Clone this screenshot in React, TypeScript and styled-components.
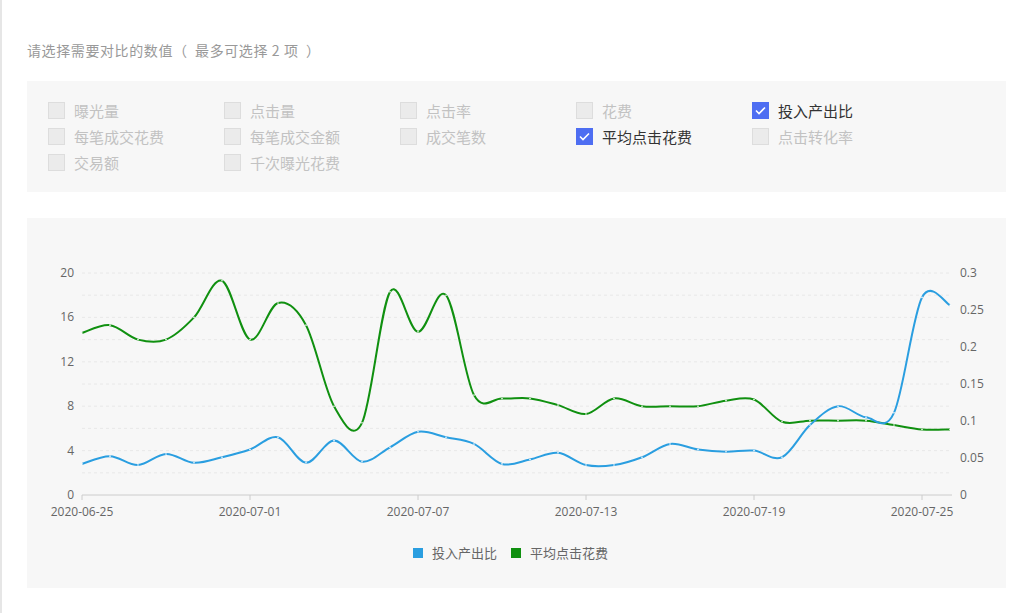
import React from "react";
import styled, { createGlobalStyle } from "styled-components";

const G = createGlobalStyle`
  body { margin: 0; background: #fff; font-family: "Noto Sans CJK SC", "Open Sans", sans-serif; }
`;
const Page = styled.div`
  width: 1033px; height: 613px; box-sizing: border-box; border-left: 2px solid #e6e6e6;
  padding: 40px 25px 0 25px; display: flex; flex-direction: column;
`;
const Title = styled.div`font-size: 14px; letter-spacing: 0.6px; color: #999; height: 22px; margin-bottom: 19px; white-space: pre;`;
const Box = styled.div`
  width: 979px; height: 111px; background: #f7f7f7; box-sizing: border-box;
  padding: 19px 0 0 21px; display: grid; grid-template-columns: repeat(5, 176px); grid-auto-rows: 26px;
`;
const Item = styled.div<{ on?: boolean }>`
  display: flex; align-items: center; gap: 9px; font-size: 15px; color: ${p => (p.on ? "#333" : "#c2c2c2")};
  height: 26px; margin-top: -3px;
`;
const Cb = styled.span<{ on?: boolean }>`
  width: 17px; height: 17px; box-sizing: border-box; display: flex; align-items: center; justify-content: center;
  background: ${p => (p.on ? "#4e6ef2" : "#ebebeb")}; border: 1px solid ${p => (p.on ? "#4e6ef2" : "#ddd")};
`;
const ChartBox = styled.div`
  margin-top: 26px; width: 979px; height: 370px; background: #f7f7f7; display: flex; flex-direction: column; align-items: center;
`;
const Plot = styled.div`align-self: flex-start;`;
const Legend = styled.div`display: flex; gap: 14px; font-size: 13px; color: #666; margin-top: 6px; margin-left: -12px;`;
const LItem = styled.div`display: flex; align-items: center; gap: 9px;`;
const Sw = styled.span<{ c: string }>`width: 10px; height: 10px; background: ${p => p.c};`;

const items: [string, boolean][] = [
  ["曝光量", false], ["点击量", false], ["点击率", false], ["花费", false], ["投入产出比", true],
  ["每笔成交花费", false], ["每笔成交金额", false], ["成交笔数", false], ["平均点击花费", true], ["点击转化率", false],
  ["交易额", false], ["千次曝光花费", false],
];

const green = [14.6,15.3,14,14,16,19.3,14,17.3,15.3,8,6.5,18.3,14.7,18,9,8.7,8.7,8.1,7.3,8.7,8,8,8,8.5,8.6,6.6,6.7,6.7,6.7,6.3,5.9,5.9];
const blue = [2.8,3.5,2.7,3.7,2.9,3.4,4.1,5.2,2.9,4.9,3,4.3,5.7,5.2,4.6,2.8,3.2,3.8,2.7,2.7,3.4,4.6,4.1,3.9,4.0,3.4,6.3,8,7,7.4,17.8,17.1];

const X0 = 55, DX = 28, Y0 = 277, K = 11.1;
const pts = (a: number[]) => a.map((v, i) => [X0 + i * DX, Y0 - v * K]);
function path(a: number[]) {
  const p = pts(a);
  let d = `M${p[0][0]},${p[0][1]}`;
  for (let i = 0; i < p.length - 1; i++) {
    const p0 = p[i - 1] || p[i], p1 = p[i], p2 = p[i + 1], p3 = p[i + 2] || p2;
    const c1 = [p1[0] + (p2[0] - p0[0]) / 6, p1[1] + (p2[1] - p0[1]) / 6];
    const c2 = [p2[0] - (p3[0] - p1[0]) / 6, p2[1] - (p3[1] - p1[1]) / 6];
    d += ` C${c1[0]},${c1[1]} ${c2[0]},${c2[1]} ${p2[0]},${p2[1]}`;
  }
  return d;
}
const dates = ["2020-06-25", "2020-07-01", "2020-07-07", "2020-07-13", "2020-07-19", "2020-07-25"];

function Chart() {
  const txt = { fontSize: 12, fill: "#666", fontFamily: "Open Sans, sans-serif" };
  return (
    <svg width="979" height="314">
      {[1, 2, 3, 4, 5, 6, 7, 8, 9, 10].map(i => (
        <line key={i} x1={X0} x2={925} y1={Y0 - i * 2 * K} y2={Y0 - i * 2 * K} stroke="#e8e8e8" strokeDasharray="3 3" />
      ))}
      <line x1={X0} x2={925} y1={Y0} y2={Y0} stroke="#ccc" />
      {[0, 4, 8, 12, 16, 20].map(v => (
        <text key={v} x={47} y={Y0 - v * K + 4} textAnchor="end" {...txt}>{v}</text>
      ))}
      {["0", "0.05", "0.1", "0.15", "0.2", "0.25", "0.3"].map((v, i) => (
        <text key={v} x={933} y={Y0 - i * 3.333 * K + 4} {...txt}>{v}</text>
      ))}
      {dates.map((d, i) => (
        <g key={d}>
          <line x1={X0 + i * 168} x2={X0 + i * 168} y1={Y0} y2={Y0 + 5} stroke="#ccc" />
          <text x={X0 + i * 168} y={Y0 + 21} textAnchor="middle" {...txt}>{d}</text>
        </g>
      ))}
      <path d={path(green)} fill="none" stroke="#109010" strokeWidth="2" />
      <path d={path(blue)} fill="none" stroke="#2a9ee0" strokeWidth="2" />
      {pts(green).map(([x, y], i) => <circle key={"g" + i} cx={x} cy={y} r="0.8" fill="#fff" />)}
      {pts(blue).map(([x, y], i) => <circle key={"b" + i} cx={x} cy={y} r="0.8" fill="#fff" />)}
    </svg>
  );
}

export default function App() {
  return (
    <Page>
      <G />
      <Title>{"请选择需要对比的数值（  最多可选择 2 项  ）"}</Title>
      <Box>
        {items.map(([t, on]) => (
          <Item key={t} on={on}>
            <Cb on={on}>
              {on && <svg width="11" height="9" viewBox="0 0 11 9"><path d="M1 4.5 L4 7.5 L10 1.5" stroke="#fff" strokeWidth="1.6" fill="none" /></svg>}
            </Cb>
            {t}
          </Item>
        ))}
      </Box>
      <ChartBox>
        <Plot><Chart /></Plot>
        <Legend>
          <LItem><Sw c="#2a9ee0" />投入产出比</LItem>
          <LItem><Sw c="#109010" />平均点击花费</LItem>
        </Legend>
      </ChartBox>
    </Page>
  );
}
